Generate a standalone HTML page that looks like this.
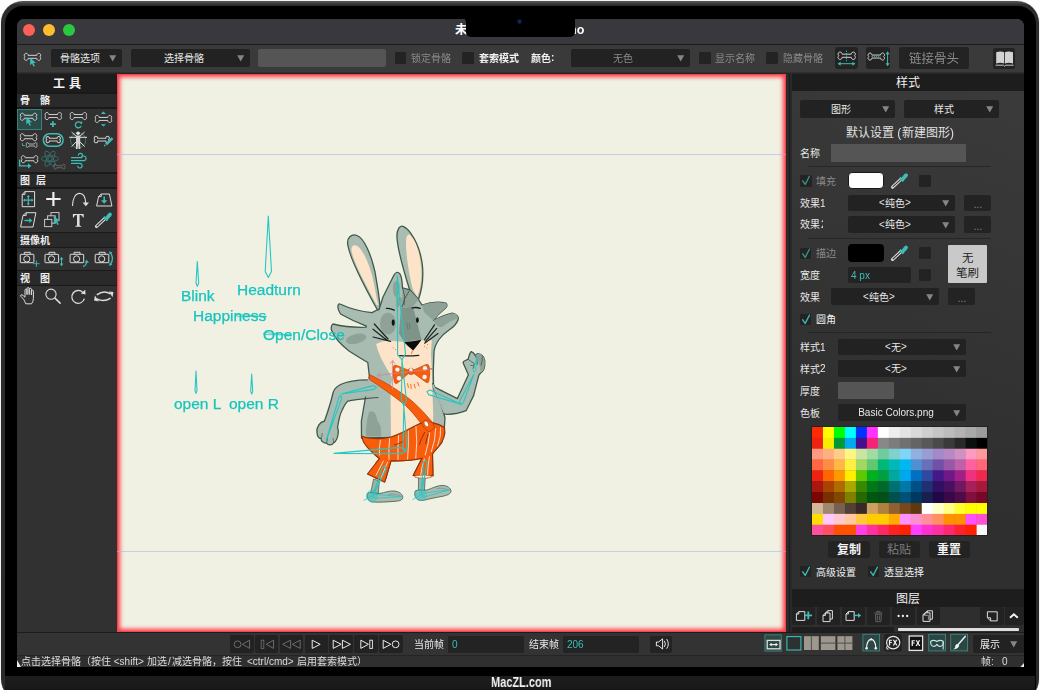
<!DOCTYPE html>
<html><head><meta charset="utf-8"><title>Moho</title>
<style>
html,body{margin:0;padding:0;background:#fff;}
body{width:1040px;height:690px;overflow:hidden;position:relative;font-family:"Liberation Sans","Noto Sans CJK SC",sans-serif;}
#root{position:absolute;left:0;top:0;width:1040px;height:690px;overflow:hidden;}
#root div,#root svg{position:absolute;}
#root svg{overflow:visible;}
#root svg text{font-family:"Liberation Sans","Noto Sans CJK SC",sans-serif;white-space:pre;}
.t{white-space:nowrap;will-change:transform;}
</style></head><body>
<div id="root"><div style="left:1px;top:1px;width:1038px;height:700px;background:linear-gradient(#5a5a5c,#2c2c2e 4px,#2a2a2c);border-radius:22px;box-shadow:0 0 1px #777;"></div>
<div style="left:4.5px;top:6px;width:1031px;height:700px;background:#000;border-radius:18px;"></div>
<div style="left:5px;top:675.5px;width:1030px;height:15px;background:linear-gradient(#1e1e1e,#171717);"></div>
<div class="t" style="left:491px;top:673.9px;font-size:14px;line-height:16.8px;color:#f0f0f0;font-weight:bold;transform:scaleX(0.785);transform-origin:0 0">MacZL.com</div>
<div id="screen" style="left:17px;top:18.5px;width:1006.5px;height:648.5px;background:#333;border-radius:7px 7px 0 0;overflow:hidden">
<div style="left:-17px;top:-18.5px;width:1040px;height:690px">
<div style="left:17px;top:18px;width:1007px;height:26px;background:#39383d;"></div>
<div style="left:17px;top:44px;width:1007px;height:1px;background:#1b1b1c;"></div>
<div style="left:23px;top:24px;width:12px;height:12px;background:#fe5f57;border-radius:6px;"></div>
<div style="left:43.3px;top:24px;width:12px;height:12px;background:#febc2e;border-radius:6px;"></div>
<div style="left:63.2px;top:24px;width:12px;height:12px;background:#28c840;border-radius:6px;"></div>
<svg style="left:455.30px;top:34.05px" width="1" height="1"><text x="0" y="0" font-size="12.5" font-weight="bold" fill="#ffffff">未</text></svg>
<div class="t" style="left:569.3px;top:22.50px;font-size:12.5px;line-height:15.00px;color:#ffffff;font-weight:bold;">ho</div>
<div style="left:466px;top:10px;width:108.5px;height:27px;background:#000;border-radius:0 0 5px 5px"></div>
<div style="left:462.2px;top:18.3px;width:4px;height:4px;background:radial-gradient(circle at 0% 100%,transparent 3.5px,#000 4.1px);"></div>
<div style="left:574.3px;top:18.3px;width:4px;height:4px;background:radial-gradient(circle at 100% 100%,transparent 3.5px,#000 4.1px);"></div>
<div style="left:517.4px;top:19.4px;width:4.4px;height:4.4px;background:radial-gradient(#10295a 30%,#050c1c 75%);border-radius:3px;"></div>
<div style="left:17px;top:45px;width:1007px;height:27px;background:#3a3a3a;"></div>
<div style="left:17px;top:71.8px;width:1007px;height:2.4px;background:linear-gradient(#363636,#202020);"></div>
<div style="left:51px;top:49px;width:71px;height:17.5px;background:#222222;border-radius:2px;"></div>
<svg style="left:60.00px;top:61.55px" width="1" height="1"><text x="0" y="0" font-size="10" fill="#e8e8e8">骨骼选项</text></svg>
<svg style="left:108.8px;top:54.75px;" width="7.4" height="6.6"><path d="M0.2,0.3 L7.2,0.3 L3.7,6.4 Z" fill="#868686"/></svg>
<div style="left:130.5px;top:49px;width:119.5px;height:17.5px;background:#222222;border-radius:2px;"></div>
<svg style="left:163.50px;top:61.55px" width="1" height="1"><text x="0" y="0" font-size="10" fill="#e8e8e8">选择骨骼</text></svg>
<svg style="left:236.8px;top:54.75px;" width="7.4" height="6.6"><path d="M0.2,0.3 L7.2,0.3 L3.7,6.4 Z" fill="#868686"/></svg>
<div style="left:258px;top:48.5px;width:128px;height:18px;background:#555555;border-radius:2px;"></div>
<div style="left:394.5px;top:52px;width:11.5px;height:11.5px;background:#232323;border-radius:1px;"></div>
<svg style="left:411.00px;top:61.80px" width="1" height="1"><text x="0" y="0" font-size="10" fill="#8a8a8a">锁定骨骼</text></svg>
<div style="left:462px;top:52px;width:11.5px;height:11.5px;background:#232323;border-radius:1px;"></div>
<svg style="left:479.00px;top:61.80px" width="1" height="1"><text x="0" y="0" font-size="10" font-weight="bold" fill="#f2f2f2">套索模式</text></svg>
<svg style="left:530.50px;top:61.80px" width="1" height="1"><text x="0" y="0" font-size="10" font-weight="bold" fill="#f2f2f2">颜色</text></svg>
<div class="t" style="left:550.50px;top:52.33px;font-size:10px;line-height:12.00px;color:#f2f2f2;font-weight:bold;white-space:pre">:</div>
<div style="left:571px;top:49px;width:118.5px;height:17.5px;background:#222222;border-radius:2px;"></div>
<svg style="left:613.00px;top:61.55px" width="1" height="1"><text x="0" y="0" font-size="10" fill="#8a8a8a">无色</text></svg>
<svg style="left:676.8px;top:54.75px;" width="7.4" height="6.6"><path d="M0.2,0.3 L7.2,0.3 L3.7,6.4 Z" fill="#868686"/></svg>
<div style="left:699px;top:52px;width:11.5px;height:11.5px;background:#232323;border-radius:1px;"></div>
<svg style="left:715.00px;top:61.80px" width="1" height="1"><text x="0" y="0" font-size="10" fill="#8a8a8a">显示名称</text></svg>
<div style="left:766px;top:52px;width:11.5px;height:11.5px;background:#232323;border-radius:1px;"></div>
<svg style="left:782.50px;top:61.80px" width="1" height="1"><text x="0" y="0" font-size="10" fill="#8a8a8a">隐藏骨骼</text></svg>
<div style="left:834.5px;top:47px;width:23.5px;height:21.5px;background:#232323;border-radius:3px;"></div>
<div style="left:866px;top:47px;width:24px;height:21.5px;background:#232323;border-radius:3px;"></div>
<div style="left:899px;top:47px;width:70px;height:21.5px;background:#232323;border-radius:3px;"></div>
<svg style="left:909.00px;top:63.05px" width="1" height="1"><text x="0" y="0" font-size="12.5" fill="#8a8a8a">链接骨头</text></svg>
<div style="left:993px;top:48px;width:22px;height:21px;background:#232323;border-radius:2px;"></div>
<div style="left:17px;top:74px;width:100px;height:558px;background:#313131;"></div>
<div style="left:17px;top:74px;width:100px;height:18px;background:#1d1d1d;"></div>
<svg style="left:52.93px;top:87.86px" width="1" height="1"><text x="0" y="0" font-size="12" font-weight="bold" fill="#f4f4f4">工</text></svg>
<div class="t" style="left:65.33px;top:76.50px;font-size:12px;line-height:14.40px;color:#f4f4f4;font-weight:bold;white-space:pre"> </div>
<svg style="left:69.07px;top:87.86px" width="1" height="1"><text x="0" y="0" font-size="12" font-weight="bold" fill="#f4f4f4">具</text></svg>
<div style="left:17px;top:92px;width:100px;height:1.5px;background:#1a1a1a;"></div>
<div style="left:17px;top:93.5px;width:100px;height:13.5px;background:#2a2a2a;"></div>
<div style="left:17px;top:107px;width:100px;height:1.5px;background:#1a1a1a;"></div>
<svg style="left:19.50px;top:104.30px" width="1" height="1"><text x="0" y="0" font-size="10" font-weight="bold" fill="#eeeeee"><tspan x="0">骨</tspan><tspan x="20">骼</tspan></text></svg>
<div style="left:17px;top:172px;width:100px;height:1.5px;background:#1a1a1a;"></div>
<div style="left:17px;top:173.5px;width:100px;height:13.5px;background:#2a2a2a;"></div>
<div style="left:17px;top:187px;width:100px;height:1.5px;background:#1a1a1a;"></div>
<svg style="left:19.50px;top:184.30px" width="1" height="1"><text x="0" y="0" font-size="10" font-weight="bold" fill="#eeeeee"><tspan x="0">图</tspan><tspan x="16">层</tspan></text></svg>
<div style="left:17px;top:231.5px;width:100px;height:1.5px;background:#1a1a1a;"></div>
<div style="left:17px;top:233px;width:100px;height:13.5px;background:#2a2a2a;"></div>
<div style="left:17px;top:246.5px;width:100px;height:1.5px;background:#1a1a1a;"></div>
<svg style="left:19.50px;top:243.80px" width="1" height="1"><text x="0" y="0" font-size="10" font-weight="bold" fill="#eeeeee">摄像机</text></svg>
<div style="left:17px;top:269.5px;width:100px;height:1.5px;background:#1a1a1a;"></div>
<div style="left:17px;top:271px;width:100px;height:13.5px;background:#2a2a2a;"></div>
<div style="left:17px;top:284.5px;width:100px;height:1.5px;background:#1a1a1a;"></div>
<svg style="left:19.50px;top:281.80px" width="1" height="1"><text x="0" y="0" font-size="10" font-weight="bold" fill="#eeeeee"><tspan x="0">视</tspan><tspan x="20">图</tspan></text></svg>
<div style="left:17px;top:109px;width:24.5px;height:21px;background:#2c4a47;box-sizing:border-box;border:1px solid #3f7f79;"></div>
<div style="left:117px;top:74px;width:669px;height:558px;background:#f0f1e3;box-shadow:inset 0 0 0 1px #f8434e,inset 0 0 4px 3px #fb3c48;"></div>
<div style="left:117px;top:154px;width:669px;height:1px;background:rgba(175,180,228,.6);"></div>
<div style="left:117px;top:551px;width:669px;height:1px;background:rgba(175,180,228,.6);"></div>
<svg style="left:0;top:0" width="1040" height="690"><path d="M378,311 C368,293 351,262 348,246 C346,237 352,233.6 357,235.5 C364,238 371,254 375,272 C378,288 379.5,300 380.5,309 Z" fill="#a9bcb2" stroke="#40584b" stroke-width="1.3" stroke-linejoin="round" /><path d="M376.6,305 C367,287 353,262 351.5,250 C351,245 355,244 358,246.5 C364,251 371,268 374,284 C376,294 377,300 378.2,305 Z" fill="#fde4c8" /><path d="M410,291 C405,275 398,252 397,238 C396.5,229 400,225.3 403,226.4 C410,229 419,244 422,262 C424,276 422,290 418,301 Z" fill="#a9bcb2" stroke="#40584b" stroke-width="1.3" stroke-linejoin="round" /><path d="M413,290 C409,275 406,255 406,243 C406,236 408,233.5 410,235 C415,239 420,252 421.2,268 C422,280 420,290 417.3,297 Z" fill="#fde4c8" /><path d="M373.6,479 L379.4,481 L378.2,494 L370.6,493 Z" fill="#9db1a6" stroke="#40584b" stroke-width="0.7" stroke-linejoin="round" /><path d="M368,493 C371,491.6 376,493.6 380,493.4 C385,492.6 389,490.6 394,491 C399,491.4 403,494.4 402.8,497.6 C402.4,500 400,501 396,501.2 C388,502 378,502.4 371.6,502 C367.6,501 366.6,496 368,493 Z" fill="#a9bcb2" stroke="#40584b" stroke-width="0.8" stroke-linejoin="round" /><path d="M418.6,475 L425.4,475.5 L424.4,491 L418.4,490 Z" fill="#9db1a6" stroke="#40584b" stroke-width="0.7" stroke-linejoin="round" /><path d="M415.6,490.6 C419,489.4 423,490.8 427,490 C432,488.4 437,485.6 442,485.4 C447,485.4 451,488 451,491.4 C450.6,494 447,495.4 442,496.4 C436,497.6 430,498.6 425,500 C421,501 417.6,500.6 416,498 C414.4,495.6 414.4,492 415.6,490.6 Z" fill="#a9bcb2" stroke="#40584b" stroke-width="0.8" stroke-linejoin="round" /><path d="M389,494.4 Q395,493.4 400,495.6 M437,488.6 Q443,487.6 448,489.8" stroke="#8ea297" stroke-width="1.4" fill="none" stroke-linecap="round"/><path d="M373,380 C360,379.5 348,381 340.5,384.5 C336,387 333.5,390.5 333,393 C331,402 327,414 324.5,421 C320,422 316,427 317,433 C317.5,437 319.5,438.5 321,438.5 C321,441 323.5,443.5 326.5,443 C328,445.5 332,445.5 333.5,443 C336,441.5 338,437 338.3,432 C338.5,429 338,428.5 337.5,428 C338.5,421 340,414 342,410.5 C344,406 346,402.5 348,401 C355,399 366,398.5 378,397.5 L380,385 Z" fill="#a9bcb2" stroke="#40584b" stroke-width="1.3" stroke-linejoin="round" /><path d="M379,309.5 L383,297 L393.5,276 Q396.5,270 400,274 Q402,277 402.5,288 L410,290 L418.5,299.5 L422,305 Q435,300.5 446,303.2 Q448.5,305.5 444.5,309 Q438,314 433.5,320.5 Q445,314.5 452.5,313.2 Q459.5,315 458,320 Q456,325.5 449,330 Q442.5,334.5 439,339.5 Q434.5,346 434,352 L433.3,371 L433.5,384.5 L440.7,403.3 L445,417.8 L444.3,428 L443,437 L361.5,438 L361.4,421 L365,400 L369.3,376 L367.8,362.5 Q360,358 349,351 Q335,340 331.5,330 Q330.5,325.5 333,324 Q348,327.8 366,327.2 L366.4,326.2 Q352,320.5 340.5,314 Q337,309 338.2,305 Q339,303.5 340,304 Q355,311 372,312.6 L377,310 Z" fill="#a9bcb2" stroke="#40584b" stroke-width="1.3" stroke-linejoin="round" /><path d="M369.2,378.4 L365.4,396.6" stroke="#a9bcb2" stroke-width="2.4" fill="none"/><path d="M364,398.9 Q371,398 378,397.5" stroke="#40584b" stroke-width="1.2" fill="none" stroke-linecap="round"/><path d="M422,305 Q435,300.5 446,303.2 Q448.5,305.5 444.5,309 Q438,314 433.5,320.5 Q428,316 424,312 Z" fill="#8ea297" /><path d="M433.5,320.5 Q445,314.5 452.5,313.2 Q458,314 458,318 Q450,321 442,327 Q437,328 433.5,320.5 Z" fill="#8ea297" /><ellipse cx="388" cy="323.5" rx="8" ry="10.8" fill="#8ea297"/><ellipse cx="356" cy="338.8" rx="10.5" ry="4.8" fill="#8ea297" transform="rotate(-14 356 338.8)"/><path d="M393,284 Q396.5,278 399.5,284 Q400.5,292 397,298 Q392,296 393,284 Z" fill="#8ea297" /><path d="M396,299 Q401,294 402,300 Q401,306 396.5,308 Z" fill="#8ea297" /><path d="M369,412 Q373,410 375.5,414 Q377,421 380.5,426 Q381.5,432 381,436.5 L366,436.5 Q365.5,424 369,412 Z" fill="#8ea297" /><path d="M401,308 L413,306.8 L421.5,339.5 L404,341.8 L399,333.5 Z" fill="#7f9489" /><path d="M413,306.8 L418.5,299.5 L410.5,291 L403,288.5 L401,308 Z" fill="#8ea297" /><path d="M402.5,288 Q406,296 404,305 M409.5,290.5 Q404,298 402,307" fill="none" stroke="#40584b" stroke-width="0.9"/><path d="M376,344 Q382,341 388.5,340.6 L404,342 L421.4,340 L431.8,340.2 Q431,350 431,356 L431.8,368 L432.2,385 L433.2,414 L433,424 Q420,427 405,433 Q396,436.5 391,437 L390.5,392 Q391,384 392.5,378 Q386,368 381,358 Q377.5,350 376,344 Z" fill="#fde4c8" /><ellipse cx="393.2" cy="322.6" rx="1.5" ry="3.1" fill="#111"/><ellipse cx="417.4" cy="320.2" rx="1.4" ry="2.9" fill="#111"/><path d="M386.4,308.4 Q390,308 394.2,310.2 M412,308 Q416,306.8 420.2,308.4" stroke="#1a1a1a" stroke-width="1.3" fill="none" stroke-linecap="round"/><path d="M404,342 Q412,341.6 421.6,339.8 Q417.5,345.5 413.2,350.4 Q408,346.6 404,342 Z" fill="#0c0c0c"/><path d="M399.6,355.6 Q409,356.2 418.8,355.3" stroke="#1a1a1a" stroke-width="1.2" fill="none" stroke-linecap="round"/><path d="M412.6,350.4 L411.4,354" stroke="#f85d0c" stroke-width="0.8"/><g stroke="#1a241f" stroke-width="1.2" stroke-linecap="round"><path d="M388,339 L374.3,324"/><path d="M387,340.2 L373,329.2"/><path d="M390.6,341.4 L373,337"/><path d="M424.3,340 L434.5,324.8"/><path d="M425.4,341.4 L436.7,328.4"/><path d="M424.6,343.2 L438,333.5"/></g><g fill="#f85d0c"><circle cx="393.2" cy="347.8" r="0.55"/><circle cx="395.6" cy="349.6" r="0.55"/><circle cx="397.6" cy="346.8" r="0.5"/><circle cx="424.6" cy="346.2" r="0.55"/><circle cx="426.8" cy="348" r="0.5"/><circle cx="427.6" cy="344.6" r="0.5"/></g><path d="M406.6,322 L408,330 M409.2,323 L410,329" stroke="#5e7368" stroke-width="0.7" fill="none"/><g stroke="#f85d0c" stroke-width="0.9" stroke-linecap="round"><path d="M407.6,383.6 L408.4,387.6"/><path d="M410.8,384.4 L411.2,388.6"/><path d="M414.2,384.2 L415.2,388"/><path d="M417.6,382.4 L419,386"/></g><path d="M369.4,374.5 C385,382 400,391 412,401 C420,408 427,416 433,423 L434.6,428 L429,432 L424.5,428 C417,418 410,409 402.8,403.3 C392,395 380,386 369.4,379.6 Z" fill="#f85d0c" stroke="#b43c06" stroke-width="0.7" stroke-linejoin="round" /><path d="M361.5,436 C368,439 380,439.5 391,437 C402,434 412,427 420,423.5 C428,421 438,423 444.5,427.5 C446,434 443,442 439,446 C436,450 433.5,452 432.5,454 L433,475.8 L413.2,475.5 L422,458.2 C412,460.5 400,461 391,460.8 L384.8,482.2 L367.4,474 L379.5,458.5 C372,453 366,446 363.5,442 Z" fill="#f85d0c" stroke="#8e3206" stroke-width="1.1" stroke-linejoin="round" /><ellipse cx="423.1" cy="476.6" rx="8.6" ry="1.5" fill="#f6ece0" stroke="#b43c06" stroke-width="0.5"/><g stroke="#fff" stroke-width="0.8" fill="none" stroke-linecap="round" opacity="0.95"><path d="M380.4,440.4 Q378.6,448 379.6,455"/><path d="M389.6,438.6 Q388.4,449 389,459.4"/><path d="M398.6,435.6 Q397.6,448 398,459.6"/><path d="M408.4,431 Q408.8,446 407.6,459"/><path d="M416,426.6 Q417.6,442 415.8,458"/><path d="M429.6,433 Q428.6,444 425.2,455"/><path d="M435.6,428.6 Q435.6,440 431.4,451.6"/><path d="M440.6,427.6 Q441.4,436 437.6,446"/><path d="M383.4,461 L376,475.4"/><path d="M387.6,462 L381,478"/><path d="M424.4,459 Q421.6,467 420.8,474.4"/><path d="M429.4,456.6 Q427.8,466 427.6,474.6"/></g><path d="M424.6,432.4 Q421,438.6 419.4,444.4 M428.2,434.2 Q426.4,439 425.8,443.6 M403,441.6 Q398,444.2 394.6,444.8" stroke="#8c2c04" stroke-width="0.9" fill="none" stroke-linecap="round"/><path d="M426,419.6 L433,423 L434.6,428 L429,432 L424.5,428 Q422,424.5 421.6,423 Z" fill="#f85d0c" stroke="#b43c06" stroke-width="0.7" stroke-linejoin="round" /><ellipse cx="426.4" cy="423.9" rx="1.9" ry="2.9" fill="#fff" stroke="#b43c06" stroke-width="0.5" transform="rotate(-28 426.4 423.9)"/><path d="M411,371.2 L396,365.2 Q393.4,365 393,367.6 Q392,375 394.6,382.4 Q395.6,384.4 397.6,383 Z" fill="#f85d0c" stroke="#b43c06" stroke-width="0.6" stroke-linejoin="round" /><path d="M411,371.2 L426.2,364.4 Q428.6,364 429.2,366.6 Q430.6,374 428.8,381.4 Q428,383.6 426,382.2 Z" fill="#f85d0c" stroke="#b43c06" stroke-width="0.6" stroke-linejoin="round" /><ellipse cx="411" cy="371.4" rx="2.9" ry="3.3" fill="#f85d0c" stroke="#b43c06" stroke-width="0.5"/><g fill="#f4f2f4"><circle cx="397.4" cy="369.6" r="2.2"/><circle cx="399" cy="378.2" r="2.2"/><circle cx="425" cy="368.2" r="2.2"/><circle cx="424.6" cy="377" r="2.2"/><circle cx="411" cy="369.8" r="1.7"/></g><path d="M428,369.4 L432.6,368.6" stroke="#b43c06" stroke-width="0.8"/><path d="M432.6,383.6 L435,387.4 L457.4,398.6 L468.4,374.8 L463.4,363.4 Q462.8,361.6 464.4,361 L468.2,359.2 Q469.6,353 471.3,351.6 Q473.6,352.4 475.3,355.4 Q477,353.4 478.8,353.8 Q481.2,354 482.3,355.8 Q484.4,357.4 484.7,360.4 Q485.2,365 484,369 Q482.6,371.8 480.6,373 L478.8,375.3 L473.6,395.6 L466.1,410.7 C458,414 450,414.5 444.6,414.2 L440.7,403.3 L434,390 Z" fill="#a9bcb2" stroke="#40584b" stroke-width="1.3" stroke-linejoin="round" /><path d="M475.3,355.4 Q477,353.4 478.8,353.8 Q481.2,354 482.3,355.8 Q484.4,357.4 484.7,360.4 Q485.2,365 484,369 Q482.6,371.8 480.6,373 Q480,366 478.6,362 Q477,358 475.3,355.4 Z" fill="#8ea297" /><path d="M432.8,384.6 L440.7,403.3 L444.6,413.2" stroke="#a9bcb2" stroke-width="1.8" fill="none"/><path d="M468.2,359.2 Q471,362 474.6,363.4 M475.3,355.4 Q477.6,360 477.4,364.6 M482.3,355.8 Q482.6,361 481,365.4 M470.4,365.4 Q472.6,366 474.4,364.4 L472.8,368.6" stroke="#40584b" stroke-width="0.8" fill="none"/><path d="M321,438.5 Q322.4,435.6 322.2,433 M326.5,443 Q327.8,440 327.4,437.4 M333.5,443 Q333.6,440 333,438" stroke="#40584b" stroke-width="0.7" fill="none"/><path d="M397.3,276 L397.6,355 L402,359.6 L405.5,353.8 Z" fill="none" stroke="#27c6c2" stroke-width="1.1" stroke-linejoin="round" opacity="1"/><path d="M402,359.6 L401.4,400 L403.8,406 L406.4,400 Z" fill="none" stroke="#27c6c2" stroke-width="1.1" stroke-linejoin="round" opacity="1"/><path d="M403.8,406 L403,447 L405,452.4 L407,447 Z" fill="none" stroke="#27c6c2" stroke-width="1.1" stroke-linejoin="round" opacity="1"/><path d="M334,453.4 L400,447.4 L405.6,449.8 L402,453.6 Z" fill="none" stroke="#27c6c2" stroke-width="1.1" stroke-linejoin="round" opacity="1"/><path d="M341.2,394 L373,385.6 L376.6,387.2 L374,389.4 Z" fill="none" stroke="#27c6c2" stroke-width="1.1" stroke-linejoin="round" opacity="1"/><path d="M326,441 L339,397.4 L340.8,395.4 L341.8,398.4 Z" fill="none" stroke="#27c6c2" stroke-width="1.1" stroke-linejoin="round" opacity="1"/><path d="M460.9,404.3 L430,390 L427,391.5 L428.5,394.6 Z" fill="none" stroke="#27c6c2" stroke-width="1.1" stroke-linejoin="round" opacity="1"/><path d="M473.8,374.6 L459.4,401.4 L460.9,404.6 L463.4,402.6 Z" fill="none" stroke="#27c6c2" stroke-width="1.1" stroke-linejoin="round" opacity="1"/><path d="M477.1,356.8 L473.4,370.4 L474.2,372.4 L475.6,370.8 Z" fill="none" stroke="#27c6c2" stroke-width="0.9" stroke-linejoin="round" opacity="1"/><path d="M373.2,495 L382,468 L384.5,466 L386,469 Z" fill="none" stroke="#27c6c2" stroke-width="1.1" stroke-linejoin="round" opacity="1"/><path d="M421.3,494.3 L423.4,462 L425.4,460.4 L427,463 Z" fill="none" stroke="#27c6c2" stroke-width="1.1" stroke-linejoin="round" opacity="1"/><path d="M402,496.6 L375,494.4 L372,496 L375,498.2 Z" fill="none" stroke="#27c6c2" stroke-width="0.8" stroke-linejoin="round" opacity="1"/><path d="M450,489.6 L423.5,493.2 L420.7,495 L423.8,497.2 Z" fill="none" stroke="#27c6c2" stroke-width="0.8" stroke-linejoin="round" opacity="1"/><circle cx="372" cy="496" r="5.6" fill="none" stroke="#27c6c2" stroke-width="0.7"/><circle cx="372" cy="496" r="4.2" fill="none" stroke="#27c6c2" stroke-width="0.7"/><circle cx="372" cy="496" r="2.8" fill="none" stroke="#27c6c2" stroke-width="0.7"/><circle cx="372" cy="496" r="1.4" fill="none" stroke="#27c6c2" stroke-width="0.7"/><circle cx="420.7" cy="495" r="5.6" fill="none" stroke="#27c6c2" stroke-width="0.7"/><circle cx="420.7" cy="495" r="4.2" fill="none" stroke="#27c6c2" stroke-width="0.7"/><circle cx="420.7" cy="495" r="2.8" fill="none" stroke="#27c6c2" stroke-width="0.7"/><circle cx="420.7" cy="495" r="1.4" fill="none" stroke="#27c6c2" stroke-width="0.7"/><path d="M372,496 L363.6,500.4 M420.7,495 L412.6,499.6" stroke="#27c6c2" stroke-width="0.8"/><g stroke="#c9899c" stroke-width="0.9" fill="none" opacity="0.9"><path d="M392.6,390 V361"/><path d="M390.2,363.8 L392.6,360.4 L395,363.8"/><path d="M433,369 L377.6,375.4"/><path d="M380.6,372.6 L377.2,375.5 L381,377.6"/></g><path d="M197.3,261.5 L196,283 L197.3,286.4 L198.7,283 Z" fill="none" stroke="#27c6c2" stroke-width="1.1" stroke-linejoin="round" opacity="1"/><path d="M268.3,216 L265.2,271.5 L268.3,277.6 L271.5,271.5 Z" fill="none" stroke="#27c6c2" stroke-width="1.1" stroke-linejoin="round" opacity="1"/><path d="M266.8,316.6 L238,314.4 L235,315.2 L238,316.4 Z" fill="none" stroke="#27c6c2" stroke-width="0.8" stroke-linejoin="round" opacity="1"/><path d="M290,335 L266,332.6 L263.3,333.4 L266,334.6 Z" fill="none" stroke="#27c6c2" stroke-width="0.8" stroke-linejoin="round" opacity="1"/><path d="M196,371 L195.0,390.6 L196,393.4 L197.0,390.6 Z" fill="none" stroke="#27c6c2" stroke-width="1.1" stroke-linejoin="round" opacity="1"/><path d="M251.7,374 L250.7,391.4 L251.7,394.0 L252.7,391.4 Z" fill="none" stroke="#27c6c2" stroke-width="1.1" stroke-linejoin="round" opacity="1"/></svg>
<div class="t" style="left:181.3px;top:288.40px;font-size:15.5px;line-height:15.5px;color:#16c4bd;-webkit-text-stroke:0.25px #16c4bd">Blink</div>
<div class="t" style="left:236.6px;top:282.40px;font-size:15.5px;line-height:15.5px;color:#16c4bd;-webkit-text-stroke:0.25px #16c4bd">Headturn</div>
<div class="t" style="left:193.2px;top:307.60px;font-size:15.5px;line-height:15.5px;color:#16c4bd;-webkit-text-stroke:0.25px #16c4bd">Happiness</div>
<div class="t" style="left:263.2px;top:327.20px;font-size:15.5px;line-height:15.5px;color:#16c4bd;-webkit-text-stroke:0.25px #16c4bd">Open/Close</div>
<div class="t" style="left:173.8px;top:395.60px;font-size:15.5px;line-height:15.5px;color:#16c4bd;-webkit-text-stroke:0.25px #16c4bd">open L</div>
<div class="t" style="left:228.8px;top:395.60px;font-size:15.5px;line-height:15.5px;color:#16c4bd;-webkit-text-stroke:0.25px #16c4bd">open R</div>
<div style="left:786px;top:74px;width:6px;height:558px;background:#2a2a2a;"></div>
<div style="left:788.5px;top:74px;width:1.5px;height:558px;background:#1a1a1a;"></div>
<div style="left:791.5px;top:74px;width:232px;height:558px;background:linear-gradient(200deg,#3b3b3b,#2f2f2f 70%);"></div>
<div style="left:791.5px;top:74px;width:232px;height:16.5px;background:#1d1d1d;"></div>
<svg style="left:895.60px;top:87.06px" width="1" height="1"><text x="0" y="0" font-size="12" fill="#f0f0f0">样式</text></svg>
<div style="left:800px;top:100px;width:95px;height:17.5px;background:#222222;border-radius:2px;"></div>
<svg style="left:830.80px;top:112.55px" width="1" height="1"><text x="0" y="0" font-size="10" fill="#e8e8e8">图形</text></svg>
<svg style="left:882.3px;top:105.75px;" width="7.4" height="6.6"><path d="M0.2,0.3 L7.2,0.3 L3.7,6.4 Z" fill="#868686"/></svg>
<div style="left:903.5px;top:100px;width:95.5px;height:17.5px;background:#222222;border-radius:2px;"></div>
<svg style="left:934.40px;top:112.55px" width="1" height="1"><text x="0" y="0" font-size="10" fill="#e8e8e8">样式</text></svg>
<svg style="left:986.1px;top:105.75px;" width="7.4" height="6.6"><path d="M0.2,0.3 L7.2,0.3 L3.7,6.4 Z" fill="#868686"/></svg>
<svg style="left:846.34px;top:137.06px" width="1" height="1"><text x="0" y="0" font-size="12" fill="#e0e0e0">默认设置</text></svg>
<div class="t" style="left:894.34px;top:125.70px;font-size:12px;line-height:14.40px;color:#e0e0e0;white-space:pre"> (</div>
<svg style="left:901.67px;top:137.06px" width="1" height="1"><text x="0" y="0" font-size="12" fill="#e0e0e0">新建图形</text></svg>
<div class="t" style="left:949.67px;top:125.70px;font-size:12px;line-height:14.40px;color:#e0e0e0;white-space:pre">)</div>
<svg style="left:800.00px;top:157.40px" width="1" height="1"><text x="0" y="0" font-size="10" fill="#e8e8e8">名称</text></svg>
<div style="left:831px;top:144px;width:135px;height:17.5px;background:#555555;border-radius:1px;"></div>
<div style="left:808px;top:166.1px;width:183px;height:1px;background:#262626;"></div>
<div style="left:800px;top:175px;width:11.5px;height:11.5px;background:#232323;border-radius:1px;"></div>
<svg style="left:800px;top:174px;" width="13.5" height="12.5"><path d="M2.7,6.8 L5.2,10.4 L9.4,2.2" fill="none" stroke="#368f89" stroke-width="1.4" stroke-linecap="round" stroke-linejoin="round"/></svg>
<svg style="left:815.80px;top:184.80px" width="1" height="1"><text x="0" y="0" font-size="10" fill="#8a8a8a">填充</text></svg>
<div style="left:847.5px;top:171.8px;width:36.3px;height:17.6px;background:#ffffff;border-radius:4px;box-sizing:border-box;border:1px solid #1a1a1a;"></div>
<div style="left:919px;top:175px;width:12px;height:12px;background:#232323;border-radius:1px;"></div>
<svg style="left:800.00px;top:207.40px" width="1" height="1"><text x="0" y="0" font-size="10" fill="#e8e8e8">效果</text></svg>
<div class="t" style="left:820.00px;top:197.94px;font-size:10px;line-height:12.00px;color:#e8e8e8;white-space:pre">1</div>
<div style="left:848px;top:194.6px;width:107px;height:16.8px;background:#222222;border-radius:2px;"></div>
<div class="t" style="left:879.16px;top:197.34px;font-size:10px;line-height:12.00px;color:#e8e8e8;white-space:pre">&lt;</div>
<svg style="left:885.00px;top:206.80px" width="1" height="1"><text x="0" y="0" font-size="10" fill="#e8e8e8">纯色</text></svg>
<div class="t" style="left:905.00px;top:197.34px;font-size:10px;line-height:12.00px;color:#e8e8e8;white-space:pre">&gt;</div>
<svg style="left:941.9px;top:200px;" width="7.4" height="6.6"><path d="M0.2,0.3 L7.2,0.3 L3.7,6.4 Z" fill="#868686"/></svg>
<div style="left:964px;top:194.6px;width:27px;height:16.8px;background:#232323;border-radius:2px;"></div>
<div class="t" style="left:977.5px;top:199.00px;font-size:10px;line-height:12.00px;color:#8a8a8a;transform:translateX(-50%);">...</div>
<svg style="left:800.00px;top:228.40px" width="1" height="1"><text x="0" y="0" font-size="10" fill="#e8e8e8">效果</text></svg>
<div style="left:820.6px;top:216px;width:2.6px;height:17px;overflow:hidden"><div class="t" style="left:0.4px;top:2.9px;font-size:10px;line-height:12px;color:#e8e8e8">2</div></div>
<div style="left:848px;top:216.2px;width:107px;height:16.8px;background:#222222;border-radius:2px;"></div>
<div class="t" style="left:879.16px;top:218.94px;font-size:10px;line-height:12.00px;color:#e8e8e8;white-space:pre">&lt;</div>
<svg style="left:885.00px;top:228.40px" width="1" height="1"><text x="0" y="0" font-size="10" fill="#e8e8e8">纯色</text></svg>
<div class="t" style="left:905.00px;top:218.94px;font-size:10px;line-height:12.00px;color:#e8e8e8;white-space:pre">&gt;</div>
<svg style="left:941.9px;top:221.6px;" width="7.4" height="6.6"><path d="M0.2,0.3 L7.2,0.3 L3.7,6.4 Z" fill="#868686"/></svg>
<div style="left:964px;top:216.2px;width:27px;height:16.8px;background:#232323;border-radius:2px;"></div>
<div class="t" style="left:977.5px;top:220.60px;font-size:10px;line-height:12.00px;color:#8a8a8a;transform:translateX(-50%);">...</div>
<div style="left:808px;top:237.9px;width:183px;height:1px;background:#262626;"></div>
<div style="left:800px;top:247.5px;width:11px;height:11px;background:#232323;border-radius:1px;"></div>
<svg style="left:800px;top:246.5px;" width="13" height="12"><path d="M2.7,6.8 L5.2,10.4 L9.4,2.2" fill="none" stroke="#368f89" stroke-width="1.4" stroke-linecap="round" stroke-linejoin="round"/></svg>
<svg style="left:815.80px;top:257.10px" width="1" height="1"><text x="0" y="0" font-size="10" fill="#8a8a8a">描边</text></svg>
<div style="left:847.5px;top:244.2px;width:36.3px;height:17.6px;background:#000000;border-radius:4px;"></div>
<div style="left:919px;top:247.3px;width:12px;height:12px;background:#232323;border-radius:1px;"></div>
<div style="left:948px;top:244.6px;width:38.5px;height:38.5px;background:#c9c9c9;border-radius:1px;"></div>
<svg style="left:961.55px;top:262.37px" width="1" height="1"><text x="0" y="0" font-size="11.5" fill="#1e1e1e">无</text></svg>
<svg style="left:955.80px;top:277.37px" width="1" height="1"><text x="0" y="0" font-size="11.5" fill="#1e1e1e">笔刷</text></svg>
<svg style="left:800.00px;top:279.40px" width="1" height="1"><text x="0" y="0" font-size="10" fill="#e8e8e8">宽度</text></svg>
<div style="left:848px;top:266.7px;width:62.7px;height:16.5px;background:#232323;border-radius:2px;"></div>
<div class="t" style="left:851px;top:269.70px;font-size:10px;line-height:12.00px;color:#3dbdb5;">4 px</div>
<div style="left:919px;top:269px;width:12px;height:12px;background:#232323;border-radius:1px;"></div>
<svg style="left:800.00px;top:301.10px" width="1" height="1"><text x="0" y="0" font-size="10" fill="#e8e8e8">效果</text></svg>
<div style="left:831.4px;top:288.4px;width:107.4px;height:16.8px;background:#222222;border-radius:2px;"></div>
<div class="t" style="left:862.86px;top:291.13px;font-size:10px;line-height:12.00px;color:#e8e8e8;white-space:pre">&lt;</div>
<svg style="left:868.70px;top:300.60px" width="1" height="1"><text x="0" y="0" font-size="10" fill="#e8e8e8">纯色</text></svg>
<div class="t" style="left:888.70px;top:291.13px;font-size:10px;line-height:12.00px;color:#e8e8e8;white-space:pre">&gt;</div>
<svg style="left:926px;top:293.8px;" width="7.4" height="6.6"><path d="M0.2,0.3 L7.2,0.3 L3.7,6.4 Z" fill="#868686"/></svg>
<div style="left:948px;top:288.4px;width:27px;height:16.8px;background:#232323;border-radius:2px;"></div>
<div class="t" style="left:961.5px;top:292.80px;font-size:10px;line-height:12.00px;color:#8a8a8a;transform:translateX(-50%);">...</div>
<div style="left:800px;top:313.7px;width:11px;height:11px;background:#232323;border-radius:1px;"></div>
<svg style="left:800px;top:312.7px;" width="13" height="12"><path d="M2.7,6.8 L5.2,10.4 L9.4,2.2" fill="none" stroke="#3db7af" stroke-width="1.4" stroke-linecap="round" stroke-linejoin="round"/></svg>
<svg style="left:815.80px;top:323.30px" width="1" height="1"><text x="0" y="0" font-size="10" fill="#f0f0f0">圆角</text></svg>
<div style="left:808px;top:331.5px;width:183px;height:1px;background:#262626;"></div>
<svg style="left:800.00px;top:351.20px" width="1" height="1"><text x="0" y="0" font-size="10" fill="#e8e8e8">样式</text></svg>
<div class="t" style="left:820.00px;top:341.74px;font-size:10px;line-height:12.00px;color:#e8e8e8;white-space:pre">1</div>
<div style="left:838.4px;top:338.5px;width:127.6px;height:16.8px;background:#222222;border-radius:2px;"></div>
<div class="t" style="left:884.76px;top:341.24px;font-size:10px;line-height:12.00px;color:#e8e8e8;white-space:pre">&lt;</div>
<svg style="left:890.60px;top:350.70px" width="1" height="1"><text x="0" y="0" font-size="10" fill="#e8e8e8">无</text></svg>
<div class="t" style="left:900.60px;top:341.24px;font-size:10px;line-height:12.00px;color:#e8e8e8;white-space:pre">&gt;</div>
<svg style="left:952.7px;top:343.9px;" width="7.4" height="6.6"><path d="M0.2,0.3 L7.2,0.3 L3.7,6.4 Z" fill="#868686"/></svg>
<svg style="left:800.00px;top:372.80px" width="1" height="1"><text x="0" y="0" font-size="10" fill="#e8e8e8">样式</text></svg>
<div class="t" style="left:820.00px;top:363.34px;font-size:10px;line-height:12.00px;color:#e8e8e8;white-space:pre">2</div>
<div style="left:838.4px;top:360.2px;width:127.6px;height:16.8px;background:#222222;border-radius:2px;"></div>
<div class="t" style="left:884.76px;top:362.94px;font-size:10px;line-height:12.00px;color:#e8e8e8;white-space:pre">&lt;</div>
<svg style="left:890.60px;top:372.40px" width="1" height="1"><text x="0" y="0" font-size="10" fill="#e8e8e8">无</text></svg>
<div class="t" style="left:900.60px;top:362.94px;font-size:10px;line-height:12.00px;color:#e8e8e8;white-space:pre">&gt;</div>
<svg style="left:952.7px;top:365.6px;" width="7.4" height="6.6"><path d="M0.2,0.3 L7.2,0.3 L3.7,6.4 Z" fill="#868686"/></svg>
<svg style="left:800.00px;top:394.80px" width="1" height="1"><text x="0" y="0" font-size="10" fill="#e8e8e8">厚度</text></svg>
<div style="left:838.4px;top:382.2px;width:55.6px;height:17px;background:#555555;border-radius:1px;"></div>
<svg style="left:800.00px;top:416.80px" width="1" height="1"><text x="0" y="0" font-size="10" fill="#e8e8e8">色板</text></svg>
<div style="left:838.4px;top:404.2px;width:127.6px;height:17px;background:#222222;border-radius:2px;"></div>
<div class="t" style="left:896px;top:406.70px;font-size:10px;line-height:12.00px;color:#e8e8e8;transform:translateX(-50%);">Basic Colors.png</div>
<svg style="left:952.7px;top:409.7px;" width="7.4" height="6.6"><path d="M0.2,0.3 L7.2,0.3 L3.7,6.4 Z" fill="#868686"/></svg>
<div style="left:811.1px;top:426.1px;width:177px;height:110px;background:#222;"></div>
<svg style="left:811.8px;top:426.8px;overflow:hidden;" width="175.6" height="108.6"><rect x="0.00" y="0.00" width="11.28" height="11.16" fill="#ff2a00"/><rect x="10.97" y="0.00" width="11.28" height="11.16" fill="#ffff00"/><rect x="21.95" y="0.00" width="11.28" height="11.16" fill="#00ff00"/><rect x="32.92" y="0.00" width="11.28" height="11.16" fill="#00ffff"/><rect x="43.90" y="0.00" width="11.28" height="11.16" fill="#0033ff"/><rect x="54.88" y="0.00" width="11.28" height="11.16" fill="#ff33ff"/><rect x="65.85" y="0.00" width="11.28" height="11.16" fill="#ffffff"/><rect x="76.83" y="0.00" width="11.28" height="11.16" fill="#eeeeee"/><rect x="87.80" y="0.00" width="11.28" height="11.16" fill="#e3e3e3"/><rect x="98.77" y="0.00" width="11.28" height="11.16" fill="#d8d8d8"/><rect x="109.75" y="0.00" width="11.28" height="11.16" fill="#cecece"/><rect x="120.72" y="0.00" width="11.28" height="11.16" fill="#c5c5c5"/><rect x="131.70" y="0.00" width="11.28" height="11.16" fill="#bcbcbc"/><rect x="142.67" y="0.00" width="11.28" height="11.16" fill="#b3b3b3"/><rect x="153.65" y="0.00" width="11.28" height="11.16" fill="#a9a9a9"/><rect x="164.62" y="0.00" width="11.28" height="11.16" fill="#9d9d9d"/><rect x="0.00" y="10.86" width="11.28" height="11.16" fill="#ee2211"/><rect x="10.97" y="10.86" width="11.28" height="11.16" fill="#f6ee00"/><rect x="21.95" y="10.86" width="11.28" height="11.16" fill="#009933"/><rect x="32.92" y="10.86" width="11.28" height="11.16" fill="#00aaee"/><rect x="43.90" y="10.86" width="11.28" height="11.16" fill="#441188"/><rect x="54.88" y="10.86" width="11.28" height="11.16" fill="#f52277"/><rect x="65.85" y="10.86" width="11.28" height="11.16" fill="#888888"/><rect x="76.83" y="10.86" width="11.28" height="11.16" fill="#7c7c7c"/><rect x="87.80" y="10.86" width="11.28" height="11.16" fill="#707070"/><rect x="98.77" y="10.86" width="11.28" height="11.16" fill="#646464"/><rect x="109.75" y="10.86" width="11.28" height="11.16" fill="#585858"/><rect x="120.72" y="10.86" width="11.28" height="11.16" fill="#4a4a4a"/><rect x="131.70" y="10.86" width="11.28" height="11.16" fill="#3a3a3a"/><rect x="142.67" y="10.86" width="11.28" height="11.16" fill="#282828"/><rect x="153.65" y="10.86" width="11.28" height="11.16" fill="#0c0f0f"/><rect x="164.62" y="10.86" width="11.28" height="11.16" fill="#000000"/><rect x="0.00" y="21.72" width="11.28" height="11.16" fill="#ff9980"/><rect x="10.97" y="21.72" width="11.28" height="11.16" fill="#ffb080"/><rect x="21.95" y="21.72" width="11.28" height="11.16" fill="#ffcc88"/><rect x="32.92" y="21.72" width="11.28" height="11.16" fill="#fff580"/><rect x="43.90" y="21.72" width="11.28" height="11.16" fill="#c8e6a0"/><rect x="54.88" y="21.72" width="11.28" height="11.16" fill="#a0dca0"/><rect x="65.85" y="21.72" width="11.28" height="11.16" fill="#70cca0"/><rect x="76.83" y="21.72" width="11.28" height="11.16" fill="#80d0d0"/><rect x="87.80" y="21.72" width="11.28" height="11.16" fill="#80d4f8"/><rect x="98.77" y="21.72" width="11.28" height="11.16" fill="#90b0e0"/><rect x="109.75" y="21.72" width="11.28" height="11.16" fill="#9c9cd4"/><rect x="120.72" y="21.72" width="11.28" height="11.16" fill="#a488c8"/><rect x="131.70" y="21.72" width="11.28" height="11.16" fill="#b888c4"/><rect x="142.67" y="21.72" width="11.28" height="11.16" fill="#d090c0"/><rect x="153.65" y="21.72" width="11.28" height="11.16" fill="#ff99c0"/><rect x="164.62" y="21.72" width="11.28" height="11.16" fill="#ff9999"/><rect x="0.00" y="32.58" width="11.28" height="11.16" fill="#ff6644"/><rect x="10.97" y="32.58" width="11.28" height="11.16" fill="#ff8c44"/><rect x="21.95" y="32.58" width="11.28" height="11.16" fill="#ffb844"/><rect x="32.92" y="32.58" width="11.28" height="11.16" fill="#fff044"/><rect x="43.90" y="32.58" width="11.28" height="11.16" fill="#a0d860"/><rect x="54.88" y="32.58" width="11.28" height="11.16" fill="#60c870"/><rect x="65.85" y="32.58" width="11.28" height="11.16" fill="#00b878"/><rect x="76.83" y="32.58" width="11.28" height="11.16" fill="#00b8b8"/><rect x="87.80" y="32.58" width="11.28" height="11.16" fill="#00b8f0"/><rect x="98.77" y="32.58" width="11.28" height="11.16" fill="#5090d0"/><rect x="109.75" y="32.58" width="11.28" height="11.16" fill="#6870b8"/><rect x="120.72" y="32.58" width="11.28" height="11.16" fill="#7050a8"/><rect x="131.70" y="32.58" width="11.28" height="11.16" fill="#9858a8"/><rect x="142.67" y="32.58" width="11.28" height="11.16" fill="#c060a8"/><rect x="153.65" y="32.58" width="11.28" height="11.16" fill="#ff60a0"/><rect x="164.62" y="32.58" width="11.28" height="11.16" fill="#ff6677"/><rect x="0.00" y="43.44" width="11.28" height="11.16" fill="#ee2211"/><rect x="10.97" y="43.44" width="11.28" height="11.16" fill="#ff6600"/><rect x="21.95" y="43.44" width="11.28" height="11.16" fill="#ff9900"/><rect x="32.92" y="43.44" width="11.28" height="11.16" fill="#ffee00"/><rect x="43.90" y="43.44" width="11.28" height="11.16" fill="#60c800"/><rect x="54.88" y="43.44" width="11.28" height="11.16" fill="#00b020"/><rect x="65.85" y="43.44" width="11.28" height="11.16" fill="#00a040"/><rect x="76.83" y="43.44" width="11.28" height="11.16" fill="#00a8a0"/><rect x="87.80" y="43.44" width="11.28" height="11.16" fill="#00a8f0"/><rect x="98.77" y="43.44" width="11.28" height="11.16" fill="#0070c0"/><rect x="109.75" y="43.44" width="11.28" height="11.16" fill="#3048a0"/><rect x="120.72" y="43.44" width="11.28" height="11.16" fill="#441888"/><rect x="131.70" y="43.44" width="11.28" height="11.16" fill="#701888"/><rect x="142.67" y="43.44" width="11.28" height="11.16" fill="#a02088"/><rect x="153.65" y="43.44" width="11.28" height="11.16" fill="#f03080"/><rect x="164.62" y="43.44" width="11.28" height="11.16" fill="#f02850"/><rect x="0.00" y="54.30" width="11.28" height="11.16" fill="#a81810"/><rect x="10.97" y="54.30" width="11.28" height="11.16" fill="#a84400"/><rect x="21.95" y="54.30" width="11.28" height="11.16" fill="#b06a00"/><rect x="32.92" y="54.30" width="11.28" height="11.16" fill="#a8a800"/><rect x="43.90" y="54.30" width="11.28" height="11.16" fill="#388800"/><rect x="54.88" y="54.30" width="11.28" height="11.16" fill="#007818"/><rect x="65.85" y="54.30" width="11.28" height="11.16" fill="#006828"/><rect x="76.83" y="54.30" width="11.28" height="11.16" fill="#007070"/><rect x="87.80" y="54.30" width="11.28" height="11.16" fill="#0078a8"/><rect x="98.77" y="54.30" width="11.28" height="11.16" fill="#005088"/><rect x="109.75" y="54.30" width="11.28" height="11.16" fill="#203070"/><rect x="120.72" y="54.30" width="11.28" height="11.16" fill="#301060"/><rect x="131.70" y="54.30" width="11.28" height="11.16" fill="#481060"/><rect x="142.67" y="54.30" width="11.28" height="11.16" fill="#701860"/><rect x="153.65" y="54.30" width="11.28" height="11.16" fill="#a82058"/><rect x="164.62" y="54.30" width="11.28" height="11.16" fill="#a81838"/><rect x="0.00" y="65.16" width="11.28" height="11.16" fill="#780800"/><rect x="10.97" y="65.16" width="11.28" height="11.16" fill="#783000"/><rect x="21.95" y="65.16" width="11.28" height="11.16" fill="#804800"/><rect x="32.92" y="65.16" width="11.28" height="11.16" fill="#808000"/><rect x="43.90" y="65.16" width="11.28" height="11.16" fill="#286800"/><rect x="54.88" y="65.16" width="11.28" height="11.16" fill="#005810"/><rect x="65.85" y="65.16" width="11.28" height="11.16" fill="#005018"/><rect x="76.83" y="65.16" width="11.28" height="11.16" fill="#005050"/><rect x="87.80" y="65.16" width="11.28" height="11.16" fill="#005078"/><rect x="98.77" y="65.16" width="11.28" height="11.16" fill="#003860"/><rect x="109.75" y="65.16" width="11.28" height="11.16" fill="#182050"/><rect x="120.72" y="65.16" width="11.28" height="11.16" fill="#200848"/><rect x="131.70" y="65.16" width="11.28" height="11.16" fill="#380848"/><rect x="142.67" y="65.16" width="11.28" height="11.16" fill="#500c48"/><rect x="153.65" y="65.16" width="11.28" height="11.16" fill="#801040"/><rect x="164.62" y="65.16" width="11.28" height="11.16" fill="#780828"/><rect x="0.00" y="76.02" width="11.28" height="11.16" fill="#d0b898"/><rect x="10.97" y="76.02" width="11.28" height="11.16" fill="#a08870"/><rect x="21.95" y="76.02" width="11.28" height="11.16" fill="#786050"/><rect x="32.92" y="76.02" width="11.28" height="11.16" fill="#504038"/><rect x="43.90" y="76.02" width="11.28" height="11.16" fill="#382828"/><rect x="54.88" y="76.02" width="11.28" height="11.16" fill="#d0a060"/><rect x="65.85" y="76.02" width="11.28" height="11.16" fill="#b08040"/><rect x="76.83" y="76.02" width="11.28" height="11.16" fill="#906030"/><rect x="87.80" y="76.02" width="11.28" height="11.16" fill="#784818"/><rect x="98.77" y="76.02" width="11.28" height="11.16" fill="#603810"/><rect x="109.75" y="76.02" width="11.28" height="11.16" fill="#ffffff"/><rect x="120.72" y="76.02" width="11.28" height="11.16" fill="#ffffc8"/><rect x="131.70" y="76.02" width="11.28" height="11.16" fill="#ffff88"/><rect x="142.67" y="76.02" width="11.28" height="11.16" fill="#ffff30"/><rect x="153.65" y="76.02" width="11.28" height="11.16" fill="#ffff00"/><rect x="164.62" y="76.02" width="11.28" height="11.16" fill="#ffff00"/><rect x="0.00" y="86.88" width="11.28" height="11.16" fill="#ffdd00"/><rect x="10.97" y="86.88" width="11.28" height="11.16" fill="#ffc8ff"/><rect x="21.95" y="86.88" width="11.28" height="11.16" fill="#ffc8d0"/><rect x="32.92" y="86.88" width="11.28" height="11.16" fill="#ffc8a0"/><rect x="43.90" y="86.88" width="11.28" height="11.16" fill="#ffc840"/><rect x="54.88" y="86.88" width="11.28" height="11.16" fill="#ffcc00"/><rect x="65.85" y="86.88" width="11.28" height="11.16" fill="#ffcc00"/><rect x="76.83" y="86.88" width="11.28" height="11.16" fill="#ffaa00"/><rect x="87.80" y="86.88" width="11.28" height="11.16" fill="#ff90ff"/><rect x="98.77" y="86.88" width="11.28" height="11.16" fill="#ff90d0"/><rect x="109.75" y="86.88" width="11.28" height="11.16" fill="#ff9098"/><rect x="120.72" y="86.88" width="11.28" height="11.16" fill="#ff9060"/><rect x="131.70" y="86.88" width="11.28" height="11.16" fill="#ff9000"/><rect x="142.67" y="86.88" width="11.28" height="11.16" fill="#ff9000"/><rect x="153.65" y="86.88" width="11.28" height="11.16" fill="#ff50ff"/><rect x="164.62" y="86.88" width="11.28" height="11.16" fill="#ff50d0"/><rect x="0.00" y="97.74" width="11.28" height="11.16" fill="#ff50a0"/><rect x="10.97" y="97.74" width="11.28" height="11.16" fill="#ff5060"/><rect x="21.95" y="97.74" width="11.28" height="11.16" fill="#ff5000"/><rect x="32.92" y="97.74" width="11.28" height="11.16" fill="#ff5000"/><rect x="43.90" y="97.74" width="11.28" height="11.16" fill="#ff40e0"/><rect x="54.88" y="97.74" width="11.28" height="11.16" fill="#ff30a0"/><rect x="65.85" y="97.74" width="11.28" height="11.16" fill="#ff2860"/><rect x="76.83" y="97.74" width="11.28" height="11.16" fill="#ff2020"/><rect x="87.80" y="97.74" width="11.28" height="11.16" fill="#ff2000"/><rect x="98.77" y="97.74" width="11.28" height="11.16" fill="#ff40ff"/><rect x="109.75" y="97.74" width="11.28" height="11.16" fill="#ff30d0"/><rect x="120.72" y="97.74" width="11.28" height="11.16" fill="#ff30a0"/><rect x="131.70" y="97.74" width="11.28" height="11.16" fill="#ff2870"/><rect x="142.67" y="97.74" width="11.28" height="11.16" fill="#ff2030"/><rect x="153.65" y="97.74" width="11.28" height="11.16" fill="#ff2000"/><rect x="164.62" y="97.74" width="11.28" height="11.16" fill="#f8f8f8"/></svg>
<div style="left:828.3px;top:541.3px;width:41.7px;height:17px;background:#232323;border-radius:3px;"></div>
<svg style="left:837.20px;top:554.36px" width="1" height="1"><text x="0" y="0" font-size="12" font-weight="bold" fill="#f4f4f4">复制</text></svg>
<div style="left:879px;top:541.3px;width:40.6px;height:17px;background:#232323;border-radius:3px;"></div>
<svg style="left:887.30px;top:554.36px" width="1" height="1"><text x="0" y="0" font-size="12" fill="#7c7c7c">粘贴</text></svg>
<div style="left:928.5px;top:541.3px;width:41.5px;height:17px;background:#232323;border-radius:3px;"></div>
<svg style="left:937.30px;top:554.36px" width="1" height="1"><text x="0" y="0" font-size="12" font-weight="bold" fill="#f4f4f4">重置</text></svg>
<div style="left:800px;top:566.3px;width:11px;height:11px;background:#232323;border-radius:1px;"></div>
<svg style="left:800px;top:565.3px;" width="13" height="12"><path d="M2.7,6.8 L5.2,10.4 L9.4,2.2" fill="none" stroke="#3db7af" stroke-width="1.4" stroke-linecap="round" stroke-linejoin="round"/></svg>
<svg style="left:815.80px;top:576.00px" width="1" height="1"><text x="0" y="0" font-size="10" fill="#f0f0f0">高级设置</text></svg>
<div style="left:867.5px;top:566.3px;width:11px;height:11px;background:#232323;border-radius:1px;"></div>
<svg style="left:867.5px;top:565.3px;" width="13" height="12"><path d="M2.7,6.8 L5.2,10.4 L9.4,2.2" fill="none" stroke="#3db7af" stroke-width="1.4" stroke-linecap="round" stroke-linejoin="round"/></svg>
<svg style="left:883.60px;top:576.00px" width="1" height="1"><text x="0" y="0" font-size="10" fill="#f0f0f0">透显选择</text></svg>
<div style="left:791.5px;top:589px;width:232px;height:17.5px;background:#1d1d1d;"></div>
<svg style="left:895.60px;top:602.56px" width="1" height="1"><text x="0" y="0" font-size="12" fill="#f0f0f0">图层</text></svg>
<div style="left:791.5px;top:606.5px;width:232px;height:26px;background:#2e2e2e;"></div>
<div style="left:792px;top:607.4px;width:23px;height:17.2px;background:#222222;border-radius:2px;"></div>
<div style="left:817px;top:607.4px;width:22.8px;height:17.2px;background:#222222;border-radius:2px;"></div>
<div style="left:842px;top:607.4px;width:22.8px;height:17.2px;background:#222222;border-radius:2px;"></div>
<div style="left:867px;top:607.4px;width:23px;height:17.2px;background:#222222;border-radius:2px;"></div>
<div style="left:891.5px;top:607.4px;width:23.3px;height:17.2px;background:#222222;border-radius:2px;"></div>
<div style="left:916.5px;top:607.4px;width:23.1px;height:17.2px;background:#222222;border-radius:2px;"></div>
<div style="left:980.4px;top:607.4px;width:23.3px;height:17.2px;background:#222222;border-radius:2px;"></div>
<div style="left:1005px;top:607.4px;width:18.5px;height:17.2px;background:#222222;border-radius:2px;"></div>
<div style="left:792px;top:627.4px;width:102px;height:5px;background:#1e1e1e;border-radius:1px;"></div>
<div style="left:898px;top:628px;width:121px;height:3px;background:#dedede;border-radius:1px;"></div>
<div style="left:17px;top:632px;width:1007px;height:1px;background:#1c1c1c;"></div>
<div style="left:17px;top:633px;width:1007px;height:21.5px;background:#333333;"></div>
<div style="left:230px;top:635px;width:23.5px;height:17.5px;background:#222222;border-radius:2px;"></div>
<div style="left:254.5px;top:635px;width:23.5px;height:17.5px;background:#222222;border-radius:2px;"></div>
<div style="left:279.5px;top:635px;width:23.5px;height:17.5px;background:#222222;border-radius:2px;"></div>
<div style="left:304.5px;top:635px;width:23.5px;height:17.5px;background:#222222;border-radius:2px;"></div>
<div style="left:329px;top:635px;width:23.5px;height:17.5px;background:#222222;border-radius:2px;"></div>
<div style="left:354px;top:635px;width:23.5px;height:17.5px;background:#222222;border-radius:2px;"></div>
<div style="left:379px;top:635px;width:23.5px;height:17.5px;background:#222222;border-radius:2px;"></div>
<svg style="left:413.70px;top:647.80px" width="1" height="1"><text x="0" y="0" font-size="10" fill="#e8e8e8">当前帧</text></svg>
<div style="left:448px;top:635.6px;width:75.5px;height:17.3px;background:#232323;border-radius:2px;"></div>
<div class="t" style="left:451.5px;top:638.60px;font-size:10px;line-height:12.00px;color:#3dbdb5;">0</div>
<svg style="left:528.60px;top:647.80px" width="1" height="1"><text x="0" y="0" font-size="10" fill="#e8e8e8">结束帧</text></svg>
<div style="left:563px;top:635.6px;width:75.7px;height:17.3px;background:#232323;border-radius:2px;"></div>
<div class="t" style="left:566.7px;top:638.60px;font-size:10px;line-height:12.00px;color:#3dbdb5;">206</div>
<div style="left:649.7px;top:635.6px;width:22.3px;height:17.3px;background:#232323;border-radius:2px;"></div>
<div style="left:972.5px;top:635px;width:51px;height:17.6px;background:#222222;border-radius:2px;"></div>
<svg style="left:980.30px;top:647.60px" width="1" height="1"><text x="0" y="0" font-size="10" fill="#f0f0f0">展示</text></svg>
<svg style="left:1009.7px;top:640.8px;" width="7.4" height="6.6"><path d="M0.2,0.3 L7.2,0.3 L3.7,6.4 Z" fill="#868686"/></svg>
<div style="left:17px;top:654.5px;width:1007px;height:1px;background:#252525;"></div>
<div style="left:17px;top:655.5px;width:1007px;height:12px;background:#2f2f2f;"></div>
<svg style="left:21.00px;top:665.40px" width="1" height="1"><text x="0" y="0" font-size="10" fill="#dcdcdc">点击选择骨骼（按住</text></svg>
<div class="t" style="left:111.00px;top:655.93px;font-size:10px;line-height:12.00px;color:#dcdcdc;white-space:pre"> &lt;shift&gt; </div>
<svg style="left:146.58px;top:665.40px" width="1" height="1"><text x="0" y="0" font-size="10" fill="#dcdcdc">加选</text></svg>
<div class="t" style="left:168.00px;top:655.93px;font-size:10px;line-height:12.00px;color:#dcdcdc;white-space:pre">/</div>
<svg style="left:172.40px;top:665.40px" width="1" height="1"><text x="0" y="0" font-size="10" fill="#dcdcdc">减选骨骼，按住</text></svg>
<div class="t" style="left:247.00px;top:655.93px;font-size:10px;line-height:12.00px;color:#dcdcdc;white-space:pre">&lt;ctrl/cmd&gt;</div>
<svg style="left:297.00px;top:665.40px" width="1" height="1"><text x="0" y="0" font-size="10" fill="#dcdcdc">启用套索模式）</text></svg>
<svg style="left:981.40px;top:665.40px" width="1" height="1"><text x="0" y="0" font-size="10" fill="#dcdcdc">帧</text></svg>
<div class="t" style="left:991.40px;top:655.93px;font-size:10px;line-height:12.00px;color:#dcdcdc;white-space:pre">:</div>
<div class="t" style="left:1002px;top:655.80px;font-size:10px;line-height:12.00px;color:#dcdcdc;">0</div>
<svg style="left:1019.5px;top:662.5px;" width="4" height="4.5"><path d="M4,0 L4,4.5 L0,4.5 Z" fill="#eee"/></svg>
<svg style="left:17px;top:660px;" width="4" height="7"><path d="M0,0 L0,7 L4,7 Z" fill="#eee"/></svg>
<svg style="left:0;top:0" width="1040" height="690"><path d="M4.3,2.45 A1.95,1.95 0 1 0 1.2,3.95 A1.95,1.95 0 1 0 4.3,5.45 L13.0,5.45 A1.95,1.95 0 1 0 16.1,3.95 A1.95,1.95 0 1 0 13.0,2.45 Z" transform="translate(23.80,52.90) scale(1.0)" fill="none" stroke="#d0d0d0" stroke-width="1.00" opacity="1"/><path d="M0,0 L0,7.6 L1.9,5.9 L3.4,9 L4.8,8.3 L3.3,5.4 L5.9,5.3 Z" transform="translate(30.10,57.60) scale(1.0)" fill="#3dbdb5"/><path d="M4.3,2.45 A1.95,1.95 0 1 0 1.2,3.95 A1.95,1.95 0 1 0 4.3,5.45 L13.0,5.45 A1.95,1.95 0 1 0 16.1,3.95 A1.95,1.95 0 1 0 13.0,2.45 Z" transform="translate(19.90,112.80) scale(1.0)" fill="none" stroke="#d0d0d0" stroke-width="1.00" opacity="1"/><path d="M0,0 L0,7.6 L1.9,5.9 L3.4,9 L4.8,8.3 L3.3,5.4 L5.9,5.3 Z" transform="translate(26.30,117.00) scale(0.98)" fill="#3dbdb5"/><path d="M4.3,2.45 A1.95,1.95 0 1 0 1.2,3.95 A1.95,1.95 0 1 0 4.3,5.45 L13.0,5.45 A1.95,1.95 0 1 0 16.1,3.95 A1.95,1.95 0 1 0 13.0,2.45 Z" transform="translate(44.60,112.10) scale(1.0)" fill="none" stroke="#d0d0d0" stroke-width="1.00" opacity="1"/><path d="M52.9,121.3 v5.8 M50,124.2 h5.8" stroke="#3dbdb5" stroke-width="1.7" fill="none"/><path d="M4.3,2.45 A1.95,1.95 0 1 0 1.2,3.95 A1.95,1.95 0 1 0 4.3,5.45 L13.0,5.45 A1.95,1.95 0 1 0 16.1,3.95 A1.95,1.95 0 1 0 13.0,2.45 Z" transform="translate(69.70,112.10) scale(1.0)" fill="none" stroke="#d0d0d0" stroke-width="1.00" opacity="1"/><path d="M80.9,123.2 A3,3 0 1 0 81.2,126.0" stroke="#3dbdb5" stroke-width="1.3" fill="none"/><path d="M79.3,122.0 L82.3,121.6 L82.0,124.6 Z" fill="#3dbdb5"/><path d="M4.3,2.45 A1.95,1.95 0 1 0 1.2,3.95 A1.95,1.95 0 1 0 4.3,5.45 L13.0,5.45 A1.95,1.95 0 1 0 16.1,3.95 A1.95,1.95 0 1 0 13.0,2.45 Z" transform="translate(94.80,115.00) scale(1.0)" fill="none" stroke="#d0d0d0" stroke-width="1.00" opacity="1"/><path d="M103.4,111.6 L106,114 L100.8,114 Z M103.4,126.6 L106,124.2 L100.8,124.2 Z" fill="#3dbdb5"/><path d="M4.3,2.45 A1.95,1.95 0 1 0 1.2,3.95 A1.95,1.95 0 1 0 4.3,5.45 L13.0,5.45 A1.95,1.95 0 1 0 16.1,3.95 A1.95,1.95 0 1 0 13.0,2.45 Z" transform="translate(19.90,133.30) scale(1.0)" fill="none" stroke="#d0d0d0" stroke-width="1.00" opacity="1"/><path d="M4.3,2.45 A1.95,1.95 0 1 0 1.2,3.95 A1.95,1.95 0 1 0 4.3,5.45 L13.0,5.45 A1.95,1.95 0 1 0 16.1,3.95 A1.95,1.95 0 1 0 13.0,2.45 Z" transform="translate(25.90,142.40) scale(0.66)" fill="none" stroke="#d0d0d0" stroke-width="1.21" opacity="1"/><path d="M22.4,143.2 V145.6 H24.6" stroke="#3dbdb5" stroke-width="0.9" fill="none"/><rect x="43.3" y="133.8" width="19.8" height="12.4" rx="6.2" fill="none" stroke="#3dbdb5" stroke-width="1.5"/><path d="M4.3,2.45 A1.95,1.95 0 1 0 1.2,3.95 A1.95,1.95 0 1 0 4.3,5.45 L13.0,5.45 A1.95,1.95 0 1 0 16.1,3.95 A1.95,1.95 0 1 0 13.0,2.45 Z" transform="translate(45.70,136.20) scale(0.87)" fill="none" stroke="#d0d0d0" stroke-width="1.15" opacity="1"/><circle cx="78.1" cy="140.3" r="7.6" fill="none" stroke="#3dbdb5" stroke-width="0.6" opacity="0.8"/><g stroke="#e6e6e6" stroke-width="1" fill="none"><path d="M69.2,137.3 H87"/><path d="M78,138 L71.6,132 M78,138 L84.6,132"/><path d="M76,142 L71.6,146.6 M80,142 L84.8,146.6"/></g><circle cx="78.1" cy="133.3" r="1.8" fill="#e2e2e2"/><path d="M76,135.6 H80.2 V142.6 L80.3,149 H78.6 L78.1,143.6 L77.6,149 H75.9 L76,142.6 Z" fill="#d4d4d4"/><path d="M4.3,2.45 A1.95,1.95 0 1 0 1.2,3.95 A1.95,1.95 0 1 0 4.3,5.45 L13.0,5.45 A1.95,1.95 0 1 0 16.1,3.95 A1.95,1.95 0 1 0 13.0,2.45 Z" transform="translate(93.80,135.90) scale(0.92)" fill="none" stroke="#d0d0d0" stroke-width="1.09" opacity="1"/><path d="M111.6,137.2 L113.4,139 L107.0,145.2 L105.2,143.4 Z" fill="#3dbdb5"/><path d="M104.6,144.2 L106.2,145.8 L103.9,146.6 Z" fill="#3dbdb5"/><path d="M4.3,2.45 A1.95,1.95 0 1 0 1.2,3.95 A1.95,1.95 0 1 0 4.3,5.45 L13.0,5.45 A1.95,1.95 0 1 0 16.1,3.95 A1.95,1.95 0 1 0 13.0,2.45 Z" transform="translate(20.90,155.30) scale(1.0)" fill="none" stroke="#d0d0d0" stroke-width="1.00" opacity="1"/><path d="M19.6,159.6 V165.9 H28.4" stroke="#3dbdb5" stroke-width="1.3" fill="none"/><path d="M28,163.3 L31.3,165.9 L28,168.5 Z" fill="#3dbdb5"/><g opacity="0.5" stroke="#3dbdb5" stroke-width="0.8" fill="none"><ellipse cx="50" cy="158.7" rx="8.6" ry="3" /><ellipse cx="50" cy="158.7" rx="8.6" ry="3" transform="rotate(60 50 158.7)"/><ellipse cx="50" cy="158.7" rx="8.6" ry="3" transform="rotate(120 50 158.7)"/><circle cx="50" cy="158.7" r="2"/></g><path d="M4.3,2.45 A1.95,1.95 0 1 0 1.2,3.95 A1.95,1.95 0 1 0 4.3,5.45 L13.0,5.45 A1.95,1.95 0 1 0 16.1,3.95 A1.95,1.95 0 1 0 13.0,2.45 Z" transform="translate(53.60,164.00) scale(0.68)" fill="none" stroke="#9a9a9a" stroke-width="1.18" opacity="0.6"/><g stroke="#3dbdb5" stroke-width="1.1" fill="none" stroke-linecap="round"><path d="M71.4,157.6 H80.3 A2.1,2.1 0 1 0 78.3,155.3"/><path d="M71.4,160.6 H83.6 A2.3,2.3 0 1 0 81.4,158.0"/><path d="M71.4,163.4 H79.8 A2.3,2.3 0 1 1 77.6,166.2"/></g><path d="M25,191.6 H34.6 V206.7 H22.2 V194.4 Z M22.2,194.4 H25 V191.6" fill="none" stroke="#dcdcdc" stroke-width="1"/><path d="M28.3,196.2 V204.2 M24.3,200.2 H32.3" stroke="#3dbdb5" stroke-width="1.2"/><path d="M28.3,194.9 L29.9,197 H26.7 Z M28.3,205.5 L29.9,203.4 H26.7 Z M23,200.2 L25.1,198.6 V201.8 Z M33.6,200.2 L31.5,198.6 V201.8 Z" fill="#3dbdb5"/><path d="M53.4,192.1 V206.1 M46.2,199 H60.6" stroke="#f0f0f0" stroke-width="2.2"/><path d="M72.5,206 C72.8,198.5 75.5,193.4 79.6,193.4 C83.4,193.4 85.4,197.6 85.8,203" fill="none" stroke="#dcdcdc" stroke-width="1.1"/><path d="M82.6,202.5 H89 L85.8,206.3 Z" fill="#dcdcdc"/><path d="M101.2,194 H109.4 L111.9,206 H96.6 L98.6,196.6 Z M98.6,196.6 H101.2 V194" fill="none" stroke="#dcdcdc" stroke-width="1"/><path d="M104.2,196.4 V201" stroke="#3dbdb5" stroke-width="1.6"/><path d="M101,200.2 H107.4 L104.2,203.8 Z" fill="#3dbdb5"/><path d="M26.2,212.7 H35.9 L33,227 H20.6 L23,215.4 Z M23,215.4 H26.2 V212.7" fill="none" stroke="#dcdcdc" stroke-width="1"/><path d="M24.4,220.5 H30" stroke="#3dbdb5" stroke-width="1.4"/><path d="M29.3,218.1 L32.3,220.5 L29.3,222.9 Z" fill="#3dbdb5"/><g fill="#2d2d2d" stroke="#c8c8c8" stroke-width="1"><rect x="51" y="212.6" width="8" height="7.6"/><rect x="47.6" y="215.8" width="7.6" height="7.4"/><rect x="44.6" y="219.4" width="7.2" height="7.2"/></g><path d="M0,0 L0,7.6 L1.9,5.9 L3.4,9 L4.8,8.3 L3.3,5.4 L5.9,5.3 Z" transform="translate(53.80,215.80) scale(1.02)" fill="#3dbdb5"/><g transform="translate(95.20,212.60) scale(1.0)" stroke-linecap="round"><path d="M1.3,13.8 L9.2,6.4" stroke="#e4e4e4" stroke-width="3.1"/><path d="M1.7,13.4 L9.6,6.0" stroke="#323232" stroke-width="1.1"/><path d="M10.6,6.6 L14.6,2.2" stroke="#3dbdb5" stroke-width="3.7" stroke-linecap="butt"/><path d="M14.0,2.8 L14.8,1.9" stroke="#3dbdb5" stroke-width="3.7"/><path d="M8.6,4.2 L12.2,8.0" stroke="#3dbdb5" stroke-width="2.1" stroke-linecap="butt"/></g><g fill="none" stroke="#dcdcdc" stroke-width="1"><rect x="20.3" y="254.3" width="13.6" height="8.4" rx="0.6"/><path d="M24.3,254.3 V252.3 H30.2 V254.3"/><circle cx="26.8" cy="258.9" r="3.1"/></g><path d="M36.4,260.5 V266.9 M33.2,263.7 H39.6" stroke="#3dbdb5" stroke-width="0.9"/><g fill="none" stroke="#dcdcdc" stroke-width="1"><rect x="45.0" y="254.3" width="13.6" height="8.4" rx="0.6"/><path d="M49.0,254.3 V252.3 H54.9 V254.3"/><circle cx="51.5" cy="258.9" r="3.1"/></g><path d="M61.5,258.8 V264.2" stroke="#3dbdb5" stroke-width="1"/><path d="M61.5,256.8 L63.4,259.4 H59.6 Z M61.5,266.2 L63.4,263.6 H59.6 Z" fill="#3dbdb5"/><g fill="none" stroke="#dcdcdc" stroke-width="1"><rect x="70.1" y="254.3" width="13.6" height="8.4" rx="0.6"/><path d="M74.1,254.3 V252.3 H80.0 V254.3"/><circle cx="76.6" cy="258.9" r="3.1"/></g><path d="M83,266.6 Q86.2,265.6 86.6,262" fill="none" stroke="#3dbdb5" stroke-width="1.2"/><path d="M86.8,259.8 L88.9,262.7 L84.7,262.5 Z" fill="#3dbdb5"/><g fill="none" stroke="#dcdcdc" stroke-width="1"><rect x="95.2" y="254.3" width="13.6" height="8.4" rx="0.6"/><path d="M99.2,254.3 V252.3 H105.1 V254.3"/><circle cx="101.7" cy="258.9" r="3.1"/></g><path d="M110.3,252.6 Q114.6,258.6 110.3,264.6" fill="none" stroke="#3dbdb5" stroke-width="1.3"/><path d="M109.2,251.3 L112.4,252.6 L109.6,254.6 Z M109.2,265.9 L112.4,264.6 L109.6,262.6 Z" fill="#3dbdb5"/><path d="M23.6,299.2 L21.0,296.6 Q20.0,295.6 21.0,294.9 Q22.0,294.4 23.2,295.6 L25.0,297.2 V290.2 Q25.0,289.1 26.0,289.1 Q27.0,289.1 27.0,290.2 V294.6 V288.7 Q27.0,287.6 28.1,287.6 Q29.2,287.6 29.2,288.7 V294.6 V289.2 Q29.2,288.2 30.3,288.2 Q31.4,288.2 31.4,289.2 V295 V291.2 Q31.4,290.2 32.4,290.2 Q33.4,290.2 33.4,291.2 V298.4 Q33.4,301.4 31.6,303.8 H25.8 Q24.6,301 23.6,299.2 Z" fill="none" stroke="#dcdcdc" stroke-width="1" stroke-linejoin="round"/><circle cx="51" cy="294.2" r="5.1" fill="none" stroke="#dcdcdc" stroke-width="1.1"/><path d="M54.7,297.9 L60.6,303.6" stroke="#dcdcdc" stroke-width="1.5"/><path d="M83.0,292.6 A6.4,6.4 0 1 0 84.4,298.6" fill="none" stroke="#dcdcdc" stroke-width="1.3"/><path d="M80.8,293.6 L85.6,294.6 L85.2,289.8 Z" fill="#dcdcdc"/><path d="M96.8,294.8 Q103.6,289.8 110.4,293.8" fill="none" stroke="#dcdcdc" stroke-width="1.5"/><path d="M108.8,291.4 L113.4,292 L112.6,297.2 Z" fill="#dcdcdc"/><path d="M110.6,298.2 Q103.8,302.6 97.0,298.9" fill="none" stroke="#dcdcdc" stroke-width="1.5"/><path d="M98.8,301.4 L94.0,300.6 L95.0,295.4 Z" fill="#dcdcdc"/><path d="M72.9,213.9 H83.7 V217.6 H82.9 Q82.6,215.1 80.6,215.0 H79.6 V225 Q79.6,226 81.2,226.1 V226.8 H75.4 V226.1 Q77,226 77,225 V215.0 H76 Q74,215.1 73.7,217.6 H72.9 Z" fill="#dedede"/><path d="M4.3,2.45 A1.95,1.95 0 1 0 1.2,3.95 A1.95,1.95 0 1 0 4.3,5.45 L13.0,5.45 A1.95,1.95 0 1 0 16.1,3.95 A1.95,1.95 0 1 0 13.0,2.45 Z" transform="translate(837.60,51.60) scale(1.05)" fill="none" stroke="#d0d0d0" stroke-width="0.95" opacity="1"/><path d="M846.5,50.6 V61.4" stroke="#3dbdb5" stroke-width="0.9" stroke-dasharray="1.4,1"/><path d="M839.6,63.7 H853.4" stroke="#3dbdb5" stroke-width="1"/><path d="M837.6,63.7 L840.6,61.7 V65.7 Z M855.4,63.7 L852.4,61.7 V65.7 Z" fill="#3dbdb5"/><path d="M4.3,2.45 A1.95,1.95 0 1 0 1.2,3.95 A1.95,1.95 0 1 0 4.3,5.45 L13.0,5.45 A1.95,1.95 0 1 0 16.1,3.95 A1.95,1.95 0 1 0 13.0,2.45 Z" transform="translate(867.60,52.60) scale(1.0)" fill="none" stroke="#d0d0d0" stroke-width="1.00" opacity="1"/><path d="M871.6,56.6 H880.4" stroke="#3dbdb5" stroke-width="0.9" stroke-dasharray="1.2,0.9"/><path d="M887.6,53.2 V64.2" stroke="#3dbdb5" stroke-width="1"/><path d="M887.6,51.2 L889.6,54.2 H885.6 Z M887.6,66.2 L889.6,63.2 H885.6 Z" fill="#3dbdb5"/><path d="M996.2,52.2 Q1000.6,50.6 1004.2,52.2 V63.4 Q1000.6,62.2 996.2,63.4 Z M1005,52.2 Q1008.6,50.6 1013.0,52.2 V63.4 Q1008.6,62.2 1005,63.4 Z" fill="#d2d2d2"/><path d="M995.6,65.2 H1003.4 L1004.6,66.2 L1005.8,65.2 H1013.6" stroke="#d8d8d8" stroke-width="0.9" fill="none"/><g transform="translate(891.30,173.30) scale(1.0)" stroke-linecap="round"><path d="M1.3,13.8 L9.2,6.4" stroke="#e4e4e4" stroke-width="3.1"/><path d="M1.7,13.4 L9.6,6.0" stroke="#383838" stroke-width="1.1"/><path d="M10.6,6.6 L14.6,2.2" stroke="#3dbdb5" stroke-width="3.7" stroke-linecap="butt"/><path d="M14.0,2.8 L14.8,1.9" stroke="#3dbdb5" stroke-width="3.7"/><path d="M8.6,4.2 L12.2,8.0" stroke="#3dbdb5" stroke-width="2.1" stroke-linecap="butt"/></g><g transform="translate(891.30,245.60) scale(1.0)" stroke-linecap="round"><path d="M1.3,13.8 L9.2,6.4" stroke="#e4e4e4" stroke-width="3.1"/><path d="M1.7,13.4 L9.6,6.0" stroke="#383838" stroke-width="1.1"/><path d="M10.6,6.6 L14.6,2.2" stroke="#3dbdb5" stroke-width="3.7" stroke-linecap="butt"/><path d="M14.0,2.8 L14.8,1.9" stroke="#3dbdb5" stroke-width="3.7"/><path d="M8.6,4.2 L12.2,8.0" stroke="#3dbdb5" stroke-width="2.1" stroke-linecap="butt"/></g><path d="M798.8,611.6 H804.8 V620.4 H796.4 V614.0 Z M796.4,614.0 H798.8 V611.6" fill="none" stroke="#dcdcdc" stroke-width="1.0" stroke-linejoin="round"/><path d="M808.3,611.6 V619.2 M804.5,615.4 H812.1" stroke="#3dbdb5" stroke-width="1.9"/><path d="M827.8,610.6 H832.4 V619.0 H825.4 V613.0 Z M825.4,613.0 H827.8 V610.6" fill="none" stroke="#dcdcdc" stroke-width="1.0" stroke-linejoin="round"/><path d="M825.4,613.0 H830.0 V621.6 H823.0 V615.4 Z M823.0,615.4 H825.4 V613.0" fill="#222" stroke="#dcdcdc" stroke-width="1.0" stroke-linejoin="round"/><path d="M848.4,611.6 H854.2 V620.4 H846.0 V614.0 Z M846.0,614.0 H848.4 V611.6" fill="none" stroke="#dcdcdc" stroke-width="1.0" stroke-linejoin="round"/><path d="M853.6,615.4 H858.6" stroke="#3dbdb5" stroke-width="1.4"/><path d="M858,613.0 L861.2,615.4 L858,617.8 Z" fill="#3dbdb5"/><g stroke="#686868" stroke-width="0.9" fill="none"><path d="M874.4,613 H882.4 M876.9,613 V611.4 H879.9 V613 M875.4,614.4 L875.9,621.6 H880.9 L881.4,614.4 Z M877.4,615.6 V620.4 M879.4,615.6 V620.4"/></g><circle cx="898.6" cy="616" r="1.15" fill="#f0f0f0"/><circle cx="902.9" cy="616" r="1.15" fill="#f0f0f0"/><circle cx="907.2" cy="616" r="1.15" fill="#f0f0f0"/><path d="M927.4,610.8 H932.4 V619.2 H925.4 V612.8 Z M925.4,612.8 H927.4 V610.8" fill="none" stroke="#dcdcdc" stroke-width="1.0" stroke-linejoin="round"/><path d="M925.0,612.8 H930.0 V621.4 H923.0 V614.8 Z M923.0,614.8 H925.0 V612.8" fill="#222" stroke="#dcdcdc" stroke-width="1.0" stroke-linejoin="round"/><path d="M924.6,615.4 H928.4 V619.8" stroke="#dcdcdc" stroke-width="0.8" fill="none" opacity="0.7"/><path d="M987.4,611.8 H997.2 V620.9 H990.6 L987.4,617.8 Z M987.4,617.8 H990.6 V620.9" fill="none" stroke="#dcdcdc" stroke-width="1" stroke-linejoin="round"/><path d="M1010.0,617.8 L1013.9,614.2 L1017.8,617.8" fill="none" stroke="#f4f4f4" stroke-width="1.9"/><circle cx="237.6" cy="644.3" r="3.4" fill="none" stroke="#6c6c6c" stroke-width="1"/><path d="M249.6,640.2 L242.4,644.3 L249.6,648.4 Z" fill="none" stroke="#6c6c6c" stroke-width="1" stroke-linejoin="miter"/><rect x="261.2" y="640.2" width="2.6" height="8.2" fill="none" stroke="#6c6c6c" stroke-width="0.9"/><path d="M273.6,640.2 L266.2,644.3 L273.6,648.4 Z" fill="none" stroke="#6c6c6c" stroke-width="1" stroke-linejoin="miter"/><path d="M290.6,640.2 L282.6,644.3 L290.6,648.4 Z" fill="none" stroke="#6c6c6c" stroke-width="1" stroke-linejoin="miter"/><path d="M300.2,640.2 L292.2,644.3 L300.2,648.4 Z" fill="none" stroke="#6c6c6c" stroke-width="1" stroke-linejoin="miter"/><path d="M312.2,640.2 L320.2,644.3 L312.2,648.4 Z" fill="none" stroke="#ececec" stroke-width="1" stroke-linejoin="miter"/><path d="M333.2,640.2 L341.2,644.3 L333.2,648.4 Z" fill="none" stroke="#ececec" stroke-width="1" stroke-linejoin="miter"/><path d="M342.4,640.2 L350.4,644.3 L342.4,648.4 Z" fill="none" stroke="#ececec" stroke-width="1" stroke-linejoin="miter"/><path d="M360.8,640.2 L368.4,644.3 L360.8,648.4 Z" fill="none" stroke="#ececec" stroke-width="1" stroke-linejoin="miter"/><rect x="369.8" y="640.2" width="2.6" height="8.2" fill="none" stroke="#ececec" stroke-width="0.9"/><path d="M383.2,640.2 L390.8,644.3 L383.2,648.4 Z" fill="none" stroke="#ececec" stroke-width="1" stroke-linejoin="miter"/><circle cx="395.6" cy="644.3" r="3.4" fill="none" stroke="#ececec" stroke-width="1"/><path d="M656.4,642 H658.6 L662.6,638.8 V649 L658.6,645.8 H656.4 Z" fill="none" stroke="#e6e6e6" stroke-width="1" stroke-linejoin="round"/><path d="M664.6,641.2 Q666.4,643.9 664.6,646.6 M666.9,639.4 Q669.9,643.9 666.9,648.4" fill="none" stroke="#e6e6e6" stroke-width="1" stroke-linecap="round"/><rect x="764.9" y="634.9" width="16.4" height="16.2" fill="#2c4644" stroke="#3f7f79" stroke-width="1"/><rect x="767.2" y="640.4" width="12.8" height="8.4" fill="none" stroke="#dedede" stroke-width="1.3"/><path d="M770.6,644.6 H776.6" stroke="#f0f0f0" stroke-width="1.2"/><path d="M769.2,644.6 L771.6,642.8 V646.4 Z M778,644.6 L775.6,642.8 V646.4 Z" fill="#f0f0f0"/><rect x="786.9" y="636.6" width="14" height="13.4" fill="#2a3332" stroke="#3dbdb5" stroke-width="1.1"/><rect x="804" y="636.2" width="14.8" height="13.8" fill="#9d978d"/><path d="M811.4,636.2 V650" stroke="#4a4743" stroke-width="0.9"/><rect x="820.8" y="636.2" width="14.6" height="13.8" fill="#9d978d"/><path d="M820.8,643.1 H835.4" stroke="#4a4743" stroke-width="0.9"/><rect x="837.4" y="636.2" width="15" height="13.8" fill="#9d978d"/><path d="M844.9,636.2 V650 M837.4,643.1 H852.4" stroke="#4a4743" stroke-width="0.9"/><rect x="862.9" y="634.3" width="16.6" height="16.6" fill="#2c4644" stroke="#3f7f79" stroke-width="1"/><path d="M866.6,648 C866.6,636.6 875.8,636.6 875.8,648" fill="none" stroke="#f0f0f0" stroke-width="1.2"/><circle cx="866.6" cy="648.2" r="1.3" fill="#f0f0f0"/><circle cx="875.8" cy="648.2" r="1.3" fill="#f0f0f0"/><circle cx="871.2" cy="639.4" r="1.1" fill="#f0f0f0"/><rect x="884.2" y="634" width="17.6" height="17.4" rx="2" fill="#222"/><ellipse cx="893.2" cy="642.6" rx="6.6" ry="6.2" fill="none" stroke="#e6e6e6" stroke-width="1.2"/><path d="M887.4,646 Q885.4,648.6 888.4,649.4" fill="none" stroke="#e6e6e6" stroke-width="1.1"/><path d="M0,0 H3.4 V1.1 H1.3 V2.4 H3.1 V3.5 H1.3 V6 H0 Z M4.1,0 H5.6 L6.5,1.8 L7.4,0 H8.9 L7.25,2.9 L9,6 H7.5 L6.5,4 L5.5,6 H4 L5.75,2.9 Z" transform="translate(888.9,639.7) scale(0.95)" fill="#f4f4f4"/><rect x="909.2" y="636" width="13.4" height="14.4" fill="#111" stroke="#e4e4e4" stroke-width="1.3"/><path d="M0,0 H3.4 V1.1 H1.3 V2.4 H3.1 V3.5 H1.3 V6 H0 Z M4.1,0 H5.6 L6.5,1.8 L7.4,0 H8.9 L7.25,2.9 L9,6 H7.5 L6.5,4 L5.5,6 H4 L5.75,2.9 Z" transform="translate(911.6,640.2) scale(0.97)" fill="#f4f4f4"/><rect x="928.7" y="634.3" width="16.8" height="16.6" fill="#2c4644" stroke="#3f7f79" stroke-width="1"/><path d="M930.6,641.4 Q933.6,639.4 936.9,641.6 Q940.2,639.4 943.4,641.4 Q943.4,646.6 939.6,646.4 Q937.9,646.2 936.9,644.4 Q935.9,646.2 934.2,646.4 Q930.6,646.6 930.6,641.4 Z" fill="none" stroke="#bfe6e2" stroke-width="1.2" stroke-linejoin="round"/><path d="M943.2,642 V649.4" stroke="#bfe6e2" stroke-width="1.1"/><rect x="950.7" y="634.3" width="16.8" height="16.6" fill="#2c4644" stroke="#3f7f79" stroke-width="1"/><path d="M965.2,636.4 L958.2,644.4" stroke="#e6f2f0" stroke-width="1.5" stroke-linecap="round"/><path d="M957.6,644 L959.2,645.6 Q958.6,649 953.2,649.6 Q955.6,647.4 955.4,645.4 Q956.2,644 957.6,644 Z" fill="#e6f2f0"/></svg>
</div></div></div></body></html>
